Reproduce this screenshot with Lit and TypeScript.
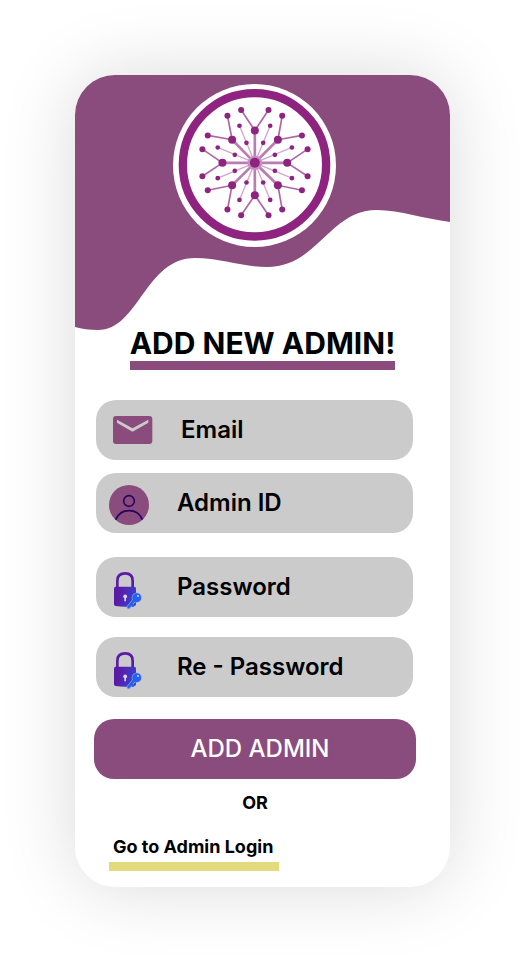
import { LitElement, html, svg, css } from "lit";
import { customElement, property } from "lit/decorators.js";

type Point = [number, number, number];

const CENTER = { x: 269, y: 263 };

const HUBS: Point[] = [
  [269, 166, 12], [338, 194, 12], [366, 263, 12], [338, 330, 12],
  [269, 360, 12], [201, 330, 12], [172, 263, 12], [201, 194, 12],
];

const TIPS: [number, number, number][] = [
  [228, 105, 0], [310, 105, 0], [351, 122, 1], [410, 181, 1],
  [427, 222, 2], [427, 303, 2], [410, 345, 3], [351, 403, 3],
  [310, 420, 4], [228, 420, 4], [187, 403, 5], [128, 345, 5],
  [112, 303, 6], [112, 222, 6], [128, 181, 7], [187, 122, 7],
];

const RAYS: [number, number, number, number][] = [
  [294, 203, 315, 152], [329, 239, 380, 217], [329, 287, 380, 309], [294, 322, 315, 374],
  [244, 322, 223, 374], [209, 287, 158, 309], [209, 239, 158, 217], [244, 203, 223, 152],
];

const logo = html`
  <svg class="logo" viewBox="24 27 488 488" role="img" aria-label="Logo">
    <circle cx="268" cy="271" r="244" fill="#fff" />
    <circle cx="268" cy="269" r="214.500" fill="none" stroke="#8e247f" stroke-width="25" />
    <g stroke="#8e247f" fill="none">
      ${RAYS.map(([, , x, y]) => svg`<line x1=${CENTER.x} y1=${CENTER.y} x2=${x} y2=${y} stroke-width="4" opacity="0.4" />`)}
      ${HUBS.map(([x, y]) => svg`<line x1=${CENTER.x} y1=${CENTER.y} x2=${x} y2=${y} stroke-width="8" opacity="0.6" />`)}
      ${TIPS.map(([x, y, hub]) => svg`<line x1=${HUBS[hub][0]} y1=${HUBS[hub][1]} x2=${x} y2=${y} stroke-width="5" opacity="0.7" />`)}
    </g>
    <circle cx="269" cy="263" r="22" fill="#c78fbf" />
    <g fill="#8e247f">
      <circle cx="269" cy="263" r="15" />
      ${HUBS.map(([x, y, r]) => svg`<circle cx=${x} cy=${y} r=${r} />`)}
      ${TIPS.map(([x, y]) => svg`<circle cx=${x} cy=${y} r="9" />`)}
      ${RAYS.map(([a, b, c, d]) => svg`<circle cx=${a} cy=${b} r="7" /><circle cx=${c} cy=${d} r="7" />`)}
    </g>
  </svg>
`;

const mailIcon = html`
  <svg class="icon wide" viewBox="57 54 132 132" aria-hidden="true">
    <rect x="69" y="78" width="118" height="84" rx="9" fill="#8a4c7d" />
    <path d="M81 89L127.500 115L175 89V98L127.500 125L81 98Z" fill="#cbcbcb" />
  </svg>
`;

const personIcon = html`
  <svg class="icon" viewBox="57 273 120 132" aria-hidden="true">
    <circle cx="117" cy="345" r="60" fill="#8a4c7d" />
    <g fill="none" stroke="#260062" stroke-width="5">
      <circle cx="117" cy="333" r="16" />
      <path d="M77 389C85 371 100 362 117 362S150 371 157 389" />
    </g>
  </svg>
`;

const lockIcon = html`
  <svg class="icon" viewBox="66 45 120 132" aria-hidden="true">
    <defs>
      <linearGradient id="lock" x1="0" y1="0" x2="1" y2="0.300">
        <stop offset="0.300" stop-color="#5b1ba6" />
        <stop offset="1" stop-color="#3a3fd0" />
      </linearGradient>
    </defs>
    <path d="M91 111V92C91 78 99 70 114.500 70S137 78 137 92V111" fill="none" stroke="#5b1ba6" stroke-width="8" />
    <path d="M86 110H142Q147 110 147 115V163Q147 168 142 168Q114 173 86 168Q81 168 81 163V115Q81 110 86 110Z" fill="url(#lock)" />
    <path d="M109 142A6 6 0 1 1 120 142L117 145V154H112V145Z" fill="#ddd3ea" />
    <circle cx="149" cy="143" r="15" fill="#7f9ce6" />
    <path d="M143 149L125 172" stroke="#8fa9ea" stroke-width="12" stroke-linecap="round" />
    <circle cx="149" cy="143" r="13" fill="#2563eb" />
    <path d="M143 149L125 171M133 164L138 167" stroke="#2563eb" stroke-width="8" stroke-linecap="round" />
    <circle cx="153" cy="138" r="3" fill="#cbd6f2" />
  </svg>
`;

@customElement("text-field")
class TextField extends LitElement {
  @property() label = "";
  @property() type = "text";
  @property() name = "";
  @property() icon: unknown = null;

  static styles = css`
    :host {
      display: block;
      min-width: 0;
    }
    .field {
      display: flex;
      align-items: center;
      gap: 28px;
      height: 60px;
      padding: 0 13px;
      box-sizing: border-box;
      border-radius: 20px;
      background: #cbcbcb;
    }
    .icon {
      flex: none;
      display: block;
      width: 40px;
      height: 44px;
    }
    .icon.wide {
      width: 44px;
    }
    .input {
      flex: 1;
      min-width: 0;
      padding: 0;
      border: 0;
      outline: 0;
      background: none;
      color: #000;
      font: 600 24px/30px Inter, sans-serif;
    }
    .input::placeholder {
      color: #000;
      opacity: 1;
    }
  `;

  render() {
    return html`
      <label class="field">
        ${this.icon}
        <input class="input" type=${this.type} name=${this.name} placeholder=${this.label} aria-label=${this.label} />
      </label>
    `;
  }
}

@customElement("app-root")
class AppRoot extends LitElement {
  static styles = css`
    :host {
      display: block;
      padding: 75px;
      background: #fff;
      color: #000;
      font-family: Inter, sans-serif;
    }
    .card {
      display: flex;
      flex-direction: column;
      padding-bottom: 16px;
      border-radius: 40px;
      background: #fff;
      box-shadow: 0 0 75px rgba(0, 0, 0, 0.15);
    }
    .header {
      position: relative;
      box-sizing: border-box;
      height: 250px;
      padding: 9px 35px 0 19px;
    }
    .wave {
      position: absolute;
      inset: 0;
      width: 100%;
      height: 256px;
      border-radius: 40px 40px 0 0;
    }
    .logo {
      position: relative;
      display: block;
      width: 163px;
      height: 163px;
      margin: 0 auto;
    }
    .title {
      position: relative;
      align-self: center;
      margin: 0 0 30px;
      border-bottom: 9px solid #8a4c7d;
      font-size: 30px;
      font-weight: 700;
      line-height: 36px;
      white-space: nowrap;
    }
    .form {
      display: flex;
      flex-direction: column;
      padding: 0 34px 0 19px;
    }
    .fields {
      display: flex;
      flex-direction: column;
      gap: 24px;
      padding: 0 3px 0 2px;
      margin-bottom: 22px;
    }
    .group {
      display: flex;
      flex-direction: column;
      gap: 13px;
    }
    .group.secret {
      gap: 20px;
    }
    .submit {
      height: 60px;
      padding: 0 0 0 10px;
      border: 0;
      border-radius: 20px;
      background: #8a4c7d;
      color: #fff;
      font: 500 24px/30px Inter, sans-serif;
      cursor: pointer;
    }
    .or {
      margin: 12px 0 20px;
      font-size: 18px;
      font-weight: 700;
      line-height: 24px;
      text-align: center;
    }
    .login {
      align-self: flex-start;
      margin-left: 15px;
      padding: 0 6px 3px 4px;
      border-bottom: 9px solid #e3db7b;
      color: #000;
      font-size: 18px;
      font-weight: 700;
      line-height: 24px;
      text-decoration: none;
    }
  `;

  render() {
    return html`
      <main class="card">
        <header class="header">
          <svg class="wave" viewBox="0 0 375 256" preserveAspectRatio="none" aria-hidden="true">
            <path
              fill="#8a4c7d"
              d="M0 0H375V147C350 144 325 135 302 135C254 135 243 192 192 192C168 192 146 183 120 183C70 183 64 255 23 255C14 255 7 254 0 252Z"
            />
          </svg>
          ${logo}
        </header>
        <h1 class="title">ADD NEW ADMIN!</h1>
        <form class="form" @submit=${(e: Event) => e.preventDefault()}>
          <div class="fields">
            <div class="group">
              <text-field label="Email" name="email" type="email" .icon=${mailIcon}></text-field>
              <text-field label="Admin ID" name="admin-id" .icon=${personIcon}></text-field>
            </div>
            <div class="group secret">
              <text-field label="Password" name="password" type="password" .icon=${lockIcon}></text-field>
              <text-field label="Re - Password" name="password-repeat" type="password" .icon=${lockIcon}></text-field>
            </div>
          </div>
          <button class="submit" type="submit">ADD ADMIN</button>
          <p class="or">OR</p>
          <a class="login" href="#login">Go to Admin Login</a>
        </form>
      </main>
    `;
  }
}
